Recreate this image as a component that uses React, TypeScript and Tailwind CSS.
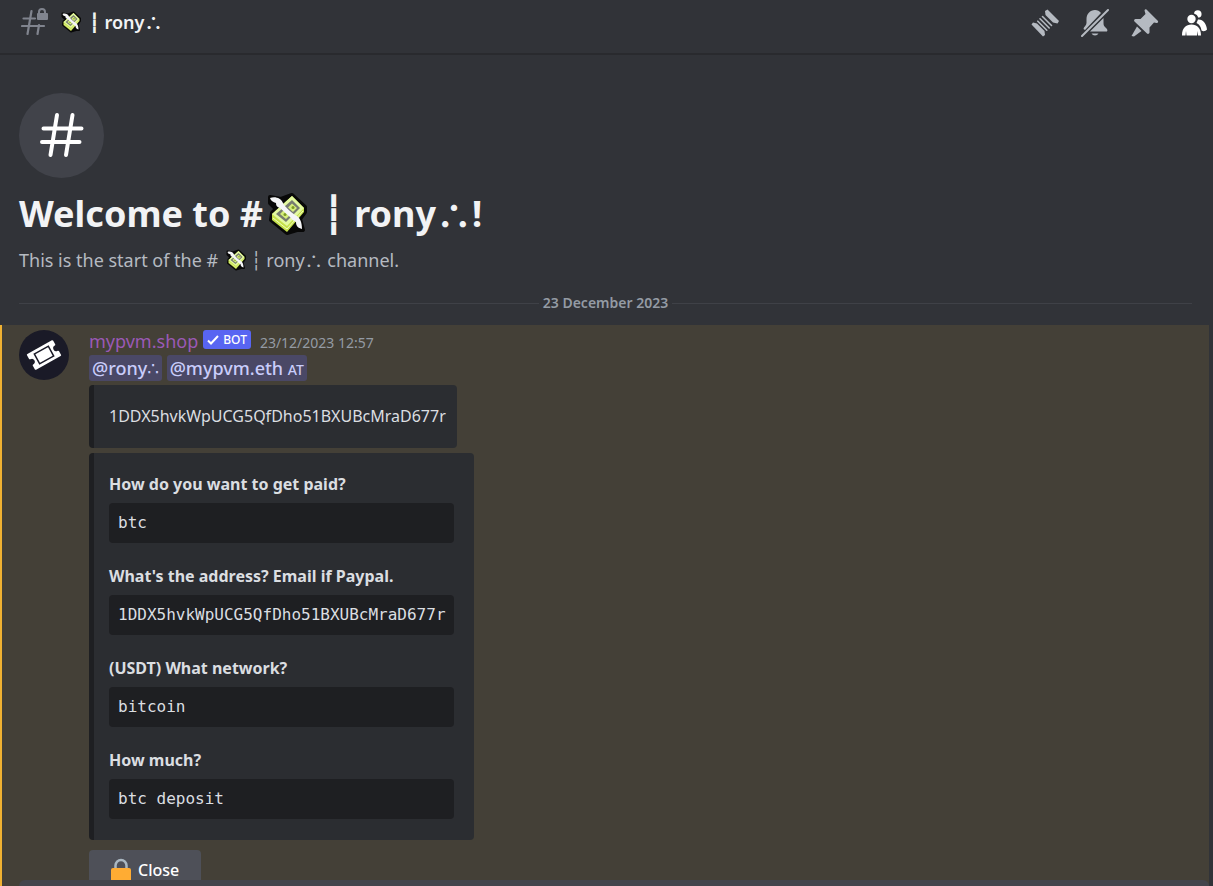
import type { ReactNode } from 'react';
import { twMerge } from 'tailwind-merge';

const fields = [
  { question: 'How do you want to get paid?', answer: 'btc' },
  {
    question: "What's the address? Email if Paypal.",
    answer: '1DDX5hvkWpUCG5QfDho51BXUBcMraD677r',
  },
  { question: '(USDT) What network?', answer: 'bitcoin' },
  { question: 'How much?', answer: 'btc deposit' },
];

function MoneyIcon({ className }: { className?: string }) {
  return (
    <svg
      viewBox="0 0 40 44"
      className={twMerge('inline-block shrink-0', className)}
      aria-hidden="true"
    >
      <path
        d="M3 5 14 7 25 3 38 15 38 20 33 27 36 38 30 38 20 41 4 28 5 21 9 17 3 11Z"
        fill="#080808"
        stroke="#080808"
        strokeWidth="4"
        strokeLinejoin="round"
      />
      <path d="M25 4 37 16 37 20 20 40 5 28 5 22Z" fill="#c5e04a" />
      <path d="M25 4 37 16 20 34 5 22Z" fill="#e3f9a0" />
      <path d="M25 8 33 16 19 30 9 22Z" fill="#777c70" />
      <path d="M25 11.500 30 16 26 20 21 15.500ZM17 18 23 23 19 27 13 22Z" fill="#d5ee7c" />
      <circle cx="26" cy="15.500" r="1.500" fill="#7c9a24" />
      <circle cx="18" cy="22.500" r="1.500" fill="#7c9a24" />
      <path d="M6 26 20 37 36 19" stroke="#f1ffc0" strokeWidth="1" fill="none" />
      <path
        d="M3 6C8 4 14 6 16 11C18 15 24 20 28 23C33 25 35 30 35 37C31 36 29 34 29 30C26 29 25 27 23 25L13 16C10 15 9 14 9 11C6 10 4 9 3 6Z"
        fill="#f4f5f7"
      />
    </svg>
  );
}

function HashIcon() {
  return (
    <svg
      viewBox="0 0 44 46"
      className="mb-[2px] h-[46px] w-11"
      fill="none"
      stroke="#fff"
      strokeWidth="4"
      strokeLinecap="round"
      aria-hidden="true"
    >
      <path d="M17 3 10.500 43M32.500 3 26 43M3.500 16.500H41.500M2 30H39.500" />
    </svg>
  );
}

function LockedHashIcon() {
  return (
    <svg viewBox="0 0 28 28" className="size-7" aria-hidden="true">
      <path
        d="M10.500 3 6.500 26M18 17 16.500 26M2.500 10.500H14M1 18H23"
        fill="none"
        stroke="#80848e"
        strokeWidth="2.200"
        strokeLinecap="round"
      />
      <path
        d="M17 5V4a4 4 0 0 1 8 0V5h1a1 1 0 0 1 1 1V11a1 1 0 0 1-1 1h-9a1 1 0 0 1-1-1V6a1 1 0 0 1 1-1ZM19 5H23V4a2 2 0 0 0-4 0Z"
        fill="#80848e"
      />
    </svg>
  );
}

function ThreadsIcon() {
  return (
    <svg viewBox="0 0 28 28" className="size-7" fill="#b5bac1" aria-hidden="true">
      <path d="M14 2 16.500 0.500 28 12 26.500 14.500 22 13.500 14.500 6Z" />
      <path d="M0.500 15.500 2 13.500 6 14.500 13.500 22 14 26 12 27.500Z" />
      <path
        d="M11.500 7.500 20.500 16.500M9 9.800 18.200 19M6.800 12.200 15.800 21.200"
        stroke="#b5bac1"
        strokeWidth="1.600"
        strokeLinecap="round"
      />
    </svg>
  );
}

function MutedBellIcon() {
  return (
    <svg viewBox="0 0 28 28" className="size-7" fill="#b5bac1" aria-hidden="true">
      <path d="M14 1C9 1 5.500 5 5.500 10V14C5.500 16.500 2.500 18 2.500 20L4 21L20 4C18.500 2 16.500 1 14 1Z" />
      <path d="M22.500 9 9 22.500H25.500C27 22.500 26.500 20 25 19C23 17.500 22.500 16 22.500 14Z" />
      <path d="M10.500 24.500H17.500A4 4 0 0 1 10.500 24.500Z" />
      <path d="M1 27 27 1" stroke="#b5bac1" strokeWidth="2" strokeLinecap="round" />
    </svg>
  );
}

function PinIcon() {
  return (
    <svg viewBox="0 0 28 28" className="size-7" fill="#b5bac1" aria-hidden="true">
      <path d="M13.500 1.500A1.500 1.500 0 0 1 15.500 0.500L27 12A1.500 1.500 0 0 1 25.500 14L23 13.500L18.500 18.500V23.500A1.500 1.500 0 0 1 16 24.500L3.500 12.500A1.500 1.500 0 0 1 4.500 10H9.500L14.500 5Z" />
      <path d="M6 17.500 10.500 22 3 27.500 0.500 27Z" />
    </svg>
  );
}

function MembersIcon() {
  return (
    <svg viewBox="0 0 26 28" className="h-7 w-[26px]" fill="#fff" aria-hidden="true">
      <circle cx="10.500" cy="10" r="4.200" />
      <path d="M13 4.500A3.800 3.800 0 1 1 17.500 8.800A6.500 6.500 0 0 0 13 4.500Z" />
      <path d="M17 10.500C22 10 25.500 15 26 20.500C24.500 22.500 22 22.500 20.500 21.500C20 18 18.500 15.500 15.500 14Z" />
      <path d="M1 26.500C1 19 5 15.500 10.500 15.500S20 19 20 26.500H17L16.500 22L16 26.500H5.500L5 22L4.500 26.500Z" />
    </svg>
  );
}

function TicketIcon() {
  return (
    <svg viewBox="0 0 50 50" className="size-[50px] shrink-0" aria-hidden="true">
      <circle cx="25" cy="25" r="25" fill="#1a1a27" />
      <g transform="rotate(-29 25 25)">
        <path
          d="M11 17H39V21A4 4 0 0 0 39 29V33H11V29A4 4 0 0 0 11 21Z"
          fill="#fff"
          stroke="#fff"
          strokeWidth="2"
          strokeLinejoin="round"
        />
        <path d="M17 19.500H33V30.500H17Z" fill="#fff" stroke="#1a1a27" strokeWidth="1.500" />
      </g>
    </svg>
  );
}

function LockIcon() {
  return (
    <svg viewBox="0 0 20 24" className="h-6 w-5" aria-hidden="true">
      <path d="M4.500 12V7.500a5.500 5.500 0 0 1 11 0V12" fill="none" stroke="#aab8c2" strokeWidth="2.500" />
      <rect y="10" width="20" height="15" rx="2" fill="#ffac33" />
    </svg>
  );
}

function ToolbarButton({ label, children }: { label: string; children: ReactNode }) {
  return (
    <button type="button" aria-label={label} className="shrink-0 hover:opacity-80">
      {children}
    </button>
  );
}

function Dots() {
  return <span className="font-['Noto_Sans_CJK_JP',sans-serif]">∴</span>;
}

function Mention({ children }: { children: ReactNode }) {
  return (
    <a
      href="#"
      className="h-[26px] rounded-[3px] bg-[#4a4866] px-[3px] text-[18px] leading-[26px] font-medium text-[#c9cdfb]"
    >
      {children}
    </a>
  );
}

function Embed({ className, children }: { className?: string; children: ReactNode }) {
  return (
    <div
      className={twMerge(
        'w-fit rounded border-l-[5px] border-[#1e1f22] bg-[#2b2d31] text-[#dbdee1]',
        className,
      )}
    >
      {children}
    </div>
  );
}

export default function App() {
  return (
    <div className="relative flex h-screen flex-col overflow-hidden bg-[#313338] font-['Noto_Sans','DejaVu_Sans',sans-serif]">
      <header className="flex h-[55px] shrink-0 items-start justify-between border-b-2 border-[#292a2e] pt-2 pr-[6px] pl-[21px]">
        <div className="flex items-center text-[#f2f3f5]">
          <LockedHashIcon />
          <h2 className="ml-3 flex h-7 items-center text-[18px] leading-7 font-semibold whitespace-pre">
            <MoneyIcon className="mr-2 h-[22px] w-5" />
            <span className="[-webkit-text-stroke:1px]">┆</span> rony
            <Dots />
          </h2>
        </div>
        <div className="flex items-center gap-[22px] pt-px">
          <ToolbarButton label="Threads">
            <ThreadsIcon />
          </ToolbarButton>
          <ToolbarButton label="Notification settings">
            <MutedBellIcon />
          </ToolbarButton>
          <ToolbarButton label="Pinned messages">
            <PinIcon />
          </ToolbarButton>
          <ToolbarButton label="Hide member list">
            <MembersIcon />
          </ToolbarButton>
        </div>
      </header>

      <main className="min-h-0 flex-1 overflow-hidden">
        <section className="px-[19px] pt-[38px]">
          <div className="flex size-[85px] items-center justify-center rounded-full bg-[#41434a]">
            <HashIcon />
          </div>
          <h1 className="mt-2 flex h-14 items-center text-[36px] leading-[56px] font-bold whitespace-pre text-[#f2f3f5]">
            Welcome to #
            <MoneyIcon className="mr-4 ml-1 h-11 w-10" />
            <span className="[-webkit-text-stroke:2px]">┆</span> rony
            <Dots />!
          </h1>
          <p className="mt-1 flex h-7 items-center text-[18px] leading-7 whitespace-pre text-[#b5bac1]">
            This is the start of the #
            <MoneyIcon className="ml-2 h-[22px] w-5" /> ┆ rony
            <Dots /> channel.
          </p>
        </section>

        <div className="mr-[21px] ml-[19px] mt-[19px] flex items-center gap-1 text-[14px] leading-5 font-semibold text-[#949ba4]">
          <div className="h-px flex-1 bg-[#3f4147]" />
          <time dateTime="2023-12-23">23 December 2023</time>
          <div className="h-px flex-1 bg-[#3f4147]" />
        </div>

        <article className="mt-3 mr-1 flex min-h-[561px] gap-5 border-l-2 border-[#f0b132] bg-[#444037] pt-[5px] pl-[17px]">
          <TicketIcon />
          <div>
            <div className="flex h-[25px] items-start">
              <h3 className="text-[18px] leading-[22px] text-[#9b59b6]">mypvm.shop</h3>
              <span className="ml-[5px] flex h-[19px] items-center gap-1 rounded-[3px] bg-[#5865f2] px-1 text-[12px] leading-4 font-medium text-white">
                <svg
                  viewBox="0 0 12 10"
                  className="h-[10px] w-3"
                  fill="none"
                  stroke="#fff"
                  strokeWidth="2"
                  aria-hidden="true"
                >
                  <path d="M1 5.500 4 8.500 11 1" />
                </svg>
                BOT
              </span>
              <time className="ml-[9px] text-[14px] leading-[26px] text-[#949ba4]">23/12/2023 12:57</time>
            </div>
            <p className="flex gap-[5px]">
              <Mention>@rony∴</Mention>
              <Mention>
                @mypvm.eth <span className="text-[14px]">AT</span>
              </Mention>
            </p>

            <Embed className="mt-1 py-[18px] pr-[11px] pl-[15px] text-[16px] leading-[27px]">
              1DDX5hvkWpUCG5QfDho51BXUBcMraD677r
            </Embed>
            <Embed className="mt-[5px] pt-5 pr-5 pb-[21px] pl-[15px]">
              <dl className="flex flex-col gap-[22px]">
                {fields.map((field) => (
                  <div key={field.question}>
                    <dt className="text-[16px] leading-[22px] font-bold">{field.question}</dt>
                    <dd className="mt-2 rounded bg-[#1e1f22] py-2 pr-2 pl-[9px] font-['DejaVu_Sans_Mono',monospace] text-[16px] leading-6">
                      {field.answer}
                    </dd>
                  </div>
                ))}
              </dl>
            </Embed>

            <button
              type="button"
              className="mt-[10px] flex h-10 items-center gap-[7px] rounded bg-[#4e5058] px-[22px] text-[16px] font-medium text-white hover:opacity-80"
            >
              <LockIcon />
              Close
            </button>
          </div>
        </article>
      </main>

      {/* top edge of the message box, overlapping the list */}
      <div className="absolute inset-x-0 bottom-0 mr-1 ml-[19px] h-[6px] rounded-t-lg bg-[#43444b]" />
    </div>
  );
}
